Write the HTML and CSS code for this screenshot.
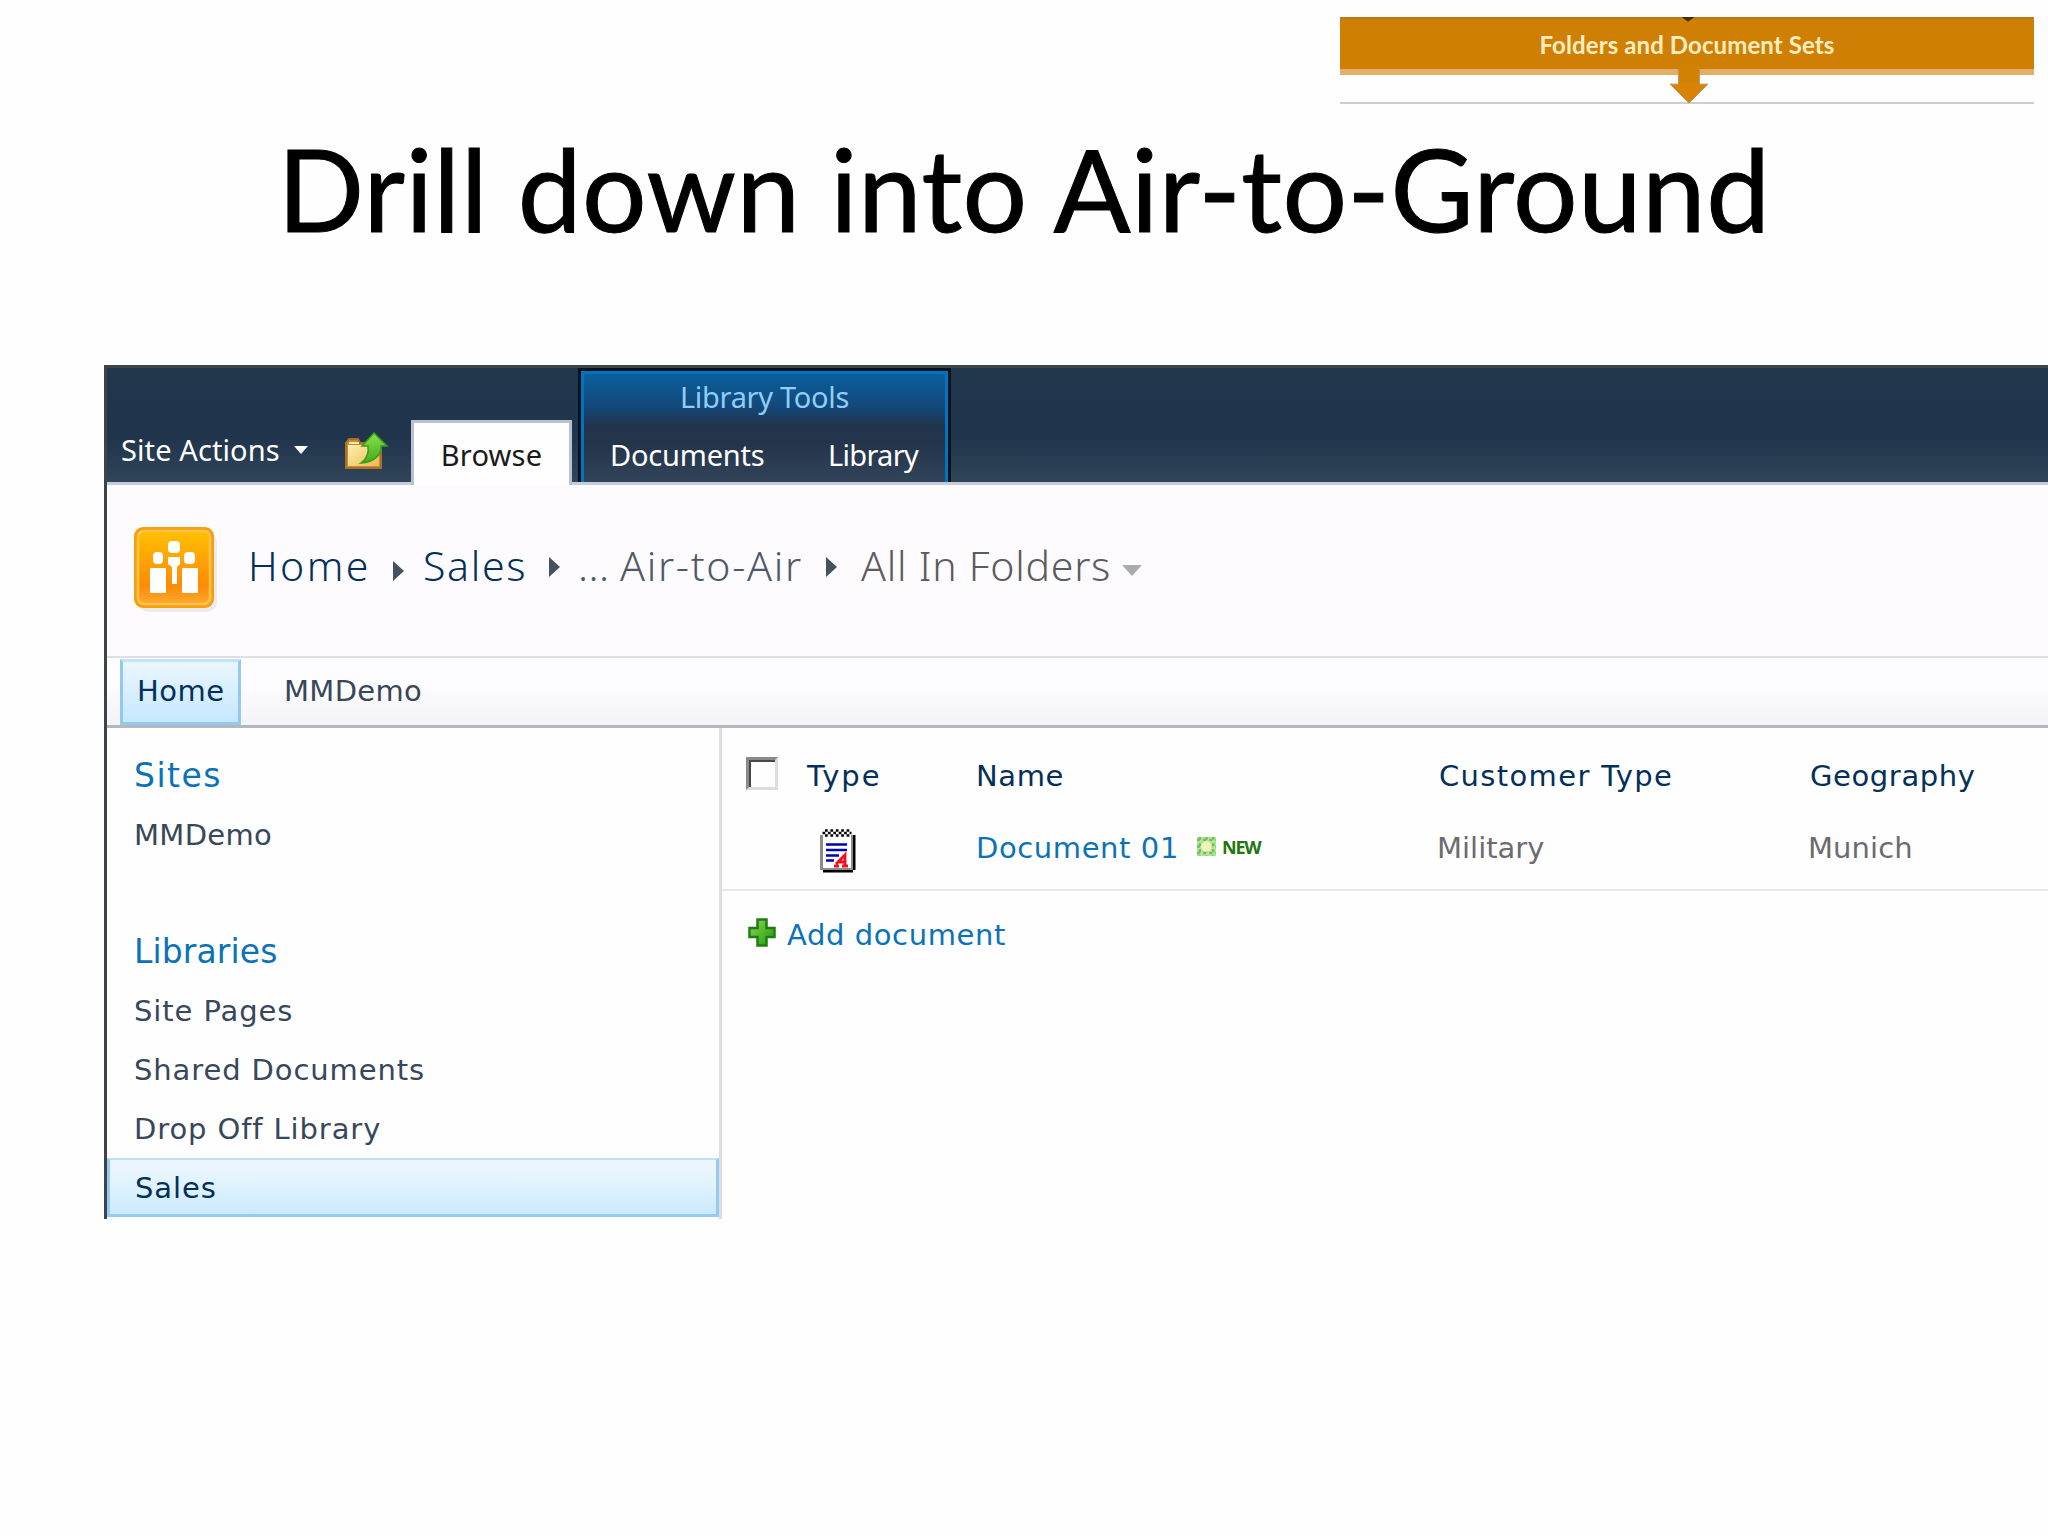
FILE: index.html
```
<!DOCTYPE html>
<html lang="en">

<head>
    <meta charset="UTF-8">
    <title>Drill down into Air-to-Ground</title>
    <link rel="stylesheet" href="styles.css">
</head>

<body>
    <div class="banner">
        <div class="banner-bar">Folders and Document Sets</div>
        <svg class="banner-arrow" width="44" height="92" viewBox="0 0 44 92">
            <path d="M14 0h14l-7 5z" fill="#4a2c08" />
            <path d="M11 54h22v17h9L22 91 2 71h9z" fill="#d98208" stroke="#b5905a" stroke-width="1" />
            <path d="M12 50h20v20H12z" fill="#d08205" />
        </svg>
    </div>
    <h1>Drill down into Air-to-Ground</h1>

    <div class="app">
        <div class="ribbon">
            <div class="site-actions">Site Actions <span class="caret"></span></div>
            <svg class="up-icon" width="45" height="40" viewBox="0 0 45 40">
                <defs>
                    <linearGradient id="folder" x1="0" y1="0" x2="1" y2="1">
                        <stop offset="0" stop-color="#fff0b0" />
                        <stop offset="1" stop-color="#f0b850" />
                    </linearGradient>
                    <linearGradient id="up" x1="0" y1="0" x2="0" y2="1">
                        <stop offset="0" stop-color="#8be04a" />
                        <stop offset="1" stop-color="#3fae1c" />
                    </linearGradient>
                </defs>
                <path d="M2 37V12l3-4h9l2 4h21v25z" fill="#c98a3a" stroke="#a9702a" stroke-width="2" />
                <path d="M4 35V14h31v21z" fill="url(#folder)" />
                <path d="M5 12h10" stroke="#ffe9a8" stroke-width="2" />
                <path d="M30 2l13 13h-6c1 8-6 16-20 17 6-4 8-10 7-17h-6z" fill="url(#up)" stroke="#3b9a1f" stroke-width="1.5" />
            </svg>
            <div class="tab-browse">Browse</div>
            <div class="context-group">
                <div class="context-title">Library Tools</div>
                <div class="context-tabs">
                    <span class="tab-documents">Documents</span>
                    <span class="tab-library">Library</span>
                </div>
            </div>
        </div>

        <div class="header">
            <svg class="logo" width="86" height="88" viewBox="0 0 86 88">
                <defs>
                    <linearGradient id="tile" x1="0" y1="0" x2="0" y2="1">
                        <stop offset="0" stop-color="#ffc000" />
                        <stop offset="0.75" stop-color="#ff8a08" />
                        <stop offset="1" stop-color="#ffa92e" />
                    </linearGradient>
                </defs>
                <rect x="4" y="5" width="79" height="80" rx="10" fill="#ecebef" />
                <rect x="0" y="0" width="80" height="81" rx="9" fill="#fb9d10" />
                <rect x="4" y="4" width="72" height="73" rx="6" fill="url(#tile)" stroke="#ffc64a" stroke-width="2.5" />
                <g fill="#fff">
                    <rect x="16" y="41" width="16" height="25" rx="1" />
                    <rect x="48" y="41" width="16" height="25" rx="1" />
                    <rect x="19" y="25" width="10" height="12" rx="4" />
                    <rect x="50" y="25" width="11" height="12" rx="4" />
                    <rect x="34" y="14" width="12" height="12" rx="4" />
                    <path d="M34 30h12v7l-3 3v17h-5V40l-4-3z" />
                </g>
            </svg>
            <div class="breadcrumb">
                <a class="crumb-home">Home</a>
                <span class="arrow low"></span>
                <a class="crumb-sales">Sales</a>
                <span class="arrow"></span>
                <span class="crumb-dots">...</span>
                <span class="crumb-air">Air-to-Air</span>
                <span class="arrow"></span>
                <span class="crumb-view">All In Folders</span>
                <span class="caret view-caret"></span>
            </div>
        </div>

        <div class="topnav">
            <a class="nav-home">Home</a>
            <a class="nav-item">MMDemo</a>
        </div>

        <div class="main">
            <div class="sidebar">
                <h2 class="sites">Sites</h2>
                <a class="tight">MMDemo</a>
                <h2 class="libraries">Libraries</h2>
                <a>Site Pages</a>
                <a>Shared Documents</a>
                <a>Drop Off Library</a>
                <a class="selected">Sales</a>
            </div>

            <div class="list">
                <div class="row head">
                    <span class="checkbox"></span>
                    <span class="col-type">Type</span>
                    <span>Name</span>
                    <span class="col-customer">Customer Type</span>
                    <span class="col-geo">Geography</span>
                </div>
                <div class="row item">
                    <span></span>
                    <svg class="doc-icon" width="36" height="44" viewBox="0 0 36 44">
                        <path d="M33 6h2.500v35H33v2.500H3V41h30z" fill="#000" />
                        <path d="M0 6h3v35H0z" fill="#8c8c8c" />
                        <path d="M3 4h30v37H3z" fill="#fff" />
                        <path d="M2 40h31M32 6v34" stroke="#8c8c8c" stroke-width="2" />
                        <path d="M5 1.500h26M5 6.500h26" stroke="#000" stroke-width="2.500" stroke-dasharray="2.700 2.700" />
                        <path d="M2.500 4h29" stroke="#000" stroke-width="2.500" stroke-dasharray="2.700 2.700" />
                        <path d="M6 15.500h21M6 21h21M6 26.500h13M6 31.500h8" stroke="#0000b4" stroke-width="2.600" />
                        <path d="M14 37h5M16 35l9-9v11M18 33h7M22 37h6" fill="none" stroke="#f01020" stroke-width="2.800" />
                    </svg>
                    <span class="name"><a>Document 01</a>
                        <svg class="new-icon" width="19" height="19" viewBox="0 0 20 20">
                            <rect width="20" height="20" fill="#b4e39a" />
                            <path d="M3 0v20M10 0v20M17 0v20M0 3h20M0 10h20M0 17h20" stroke="#6cc05a" stroke-width="2.500" stroke-dasharray="3 3.500" />
                            <circle cx="10" cy="10" r="5.500" fill="#f4f3b4" />
                        </svg>
                        <b>NEW</b>
                    </span>
                    <span class="value-customer">Military</span>
                    <span class="value-geo">Munich</span>
                </div>
                <div class="add">
                    <svg width="28" height="29" viewBox="0 0 28 29">
                        <defs>
                            <linearGradient id="plus" x1="0" y1="0" x2="1" y2="1">
                                <stop offset="0" stop-color="#8fd64c" />
                                <stop offset="1" stop-color="#1f9a12" />
                            </linearGradient>
                        </defs>
                        <path d="M9.500 1.500h9v8.500h8v9h-8v8.500h-9V19h-8v-9h8z" fill="url(#plus)" stroke="#1f7d12" stroke-width="2.500" />
                    </svg>
                    <a>Add document</a>
                </div>
            </div>
        </div>
    </div>
</body>

</html>
```
FILE: styles.css
```
body {
    margin: 0;
    width: 2048px;
    height: 1536px;
    overflow: hidden;
    display: flex;
    flex-direction: column;
    background: #fefefe;
    font-family: "DejaVu Sans", Verdana, sans-serif;
    font-size: 29px;
}

/* orange strip at the top right */
.banner {
    position: relative;
    box-sizing: border-box;
    align-self: flex-end;
    width: 694px;
    height: 87px;
    margin: 17px 14px 0 0;
    border-bottom: 2px solid #d2cdc6;
}

.banner-bar {
    height: 52px;
    background: #cf8004;
    border-bottom: 6px solid #e2ae6a;
    box-shadow: inset 0 2px 0 #b87a1c;
    font: bold 24px/55px Lato, sans-serif;
    letter-spacing: 0.1px;
    color: #ffedc0;
    text-align: center;
}

.banner-arrow {
    position: absolute;
    left: 327px;
    top: 0;
    height: 87px;
}

h1 {
    margin: 18px 0 0;
    font: 114px/132px Lato, Calibri, sans-serif;
    letter-spacing: 0.5px;
    text-align: center;
    color: #000;
    -webkit-text-stroke: 1px #000;
}

.app {
    box-sizing: border-box;
    height: 854px;
    margin: 111px 0 0 104px;
    border-top: 3px solid #3f4444;
    border-left: 3px solid #3f4246;
}

/* ribbon */
.ribbon {
    display: flex;
    align-items: flex-end;
    height: 114px;
    background: linear-gradient(#21374c 0%, #20344b 60%, #30445a 100%);
    border-bottom: 3px solid #c6ccdb;
    font-family: "Noto Sans", Tahoma, sans-serif;
    color: #fff;
}

.site-actions {
    display: flex;
    align-items: center;
    width: 223px;
    padding-left: 14px;
    margin-bottom: 12px;
    line-height: 40px;
    letter-spacing: 0.1px;
}

.caret {
    margin-left: 14px;
    border: 7px solid transparent;
    border-top: 8px solid #fff;
    border-bottom: 0;
}

.up-icon {
    width: 45px;
    margin: 0 22px 11px 0;
}

.tab-browse {
    box-sizing: border-box;
    width: 161px;
    height: 65px;
    margin-bottom: -3px;
    border: 3px solid #b9c0cf;
    border-bottom: 0;
    background: #fefefe;
    color: #1a1a1a;
    line-height: 63px;
    letter-spacing: 0.2px;
    text-align: center;
}

.context-group {
    box-sizing: border-box;
    width: 367px;
    height: 111px;
    margin-left: 9px;
    border: 3px solid #0173c1;
    border-bottom: 0;
    outline: 3px solid #06141f;
    clip-path: inset(-3px -3px 0 -3px);
    background: linear-gradient(#0a5f9e 0%, #12487a 30%, #22344c 48%, #24344b 65%, #30445a 100%);
}

.context-title {
    line-height: 45px;
    letter-spacing: -0.3px;
    text-align: center;
    color: #8fcdf8;
}

.context-tabs {
    display: flex;
    padding: 6px 0 0 26px;
    line-height: 60px;
}

.tab-documents {
    width: 218px;
    letter-spacing: -0.2px;
}

.tab-library {
    letter-spacing: -0.7px;
}

/* title area */
.header {
    display: flex;
    box-sizing: border-box;
    height: 171px;
    padding: 42px 0 0 27px;
    background: #fdfbfe;
}

.breadcrumb {
    display: grid;
    grid-template-columns: 145px 30px 126px 29px 42px 206px 35px 261px 30px;
    align-items: center;
    height: 76px;
    margin-left: 28px;
    font: 350 41px/76px "Noto Sans", Verdana, sans-serif;
    color: #4e5a69;
    white-space: nowrap;
}

.crumb-home {
    color: #03305a;
    letter-spacing: 2.4px;
}

.crumb-sales {
    color: #03305a;
    letter-spacing: 1.7px;
}

.crumb-dots {
    letter-spacing: 0.5px;
}

.crumb-air {
    letter-spacing: 1.7px;
}

.crumb-view {
    color: #5c5c60;
    letter-spacing: 0.75px;
}

.arrow {
    width: 0;
    margin-top: 4px;
    border: 10px solid transparent;
    border-left: 11px solid #44525f;
    border-right: 0;
}

.arrow.low {
    margin-top: 12px;
}

.view-caret {
    width: 0;
    margin: 10px 0 0;
    border-width: 11px 10px 0;
    border-top-color: #aaabae;
}

.topnav {
    display: flex;
    box-sizing: border-box;
    height: 72px;
    padding: 1px 0 0 13px;
    border-top: 2px solid #dfdfe4;
    border-bottom: 3px solid #b6b7ba;
    background: linear-gradient(#fdfcfe 40%, #f3f4f7);
    line-height: 64px;
    color: #38475a;
}

.nav-home {
    box-sizing: border-box;
    width: 121px;
    padding-left: 14px;
    border: 3px solid #92c9f3;
    border-top-color: #c4e2f8;
    background: linear-gradient(#e9f6fe, #c6e8fd);
    line-height: 58px;
    letter-spacing: 0.5px;
    color: #03305a;
}

.nav-item {
    margin-left: 43px;
    letter-spacing: 0.3px;
}

.main {
    display: flex;
    height: 491px;
}

.sidebar {
    display: flex;
    flex-direction: column;
    box-sizing: border-box;
    width: 615px;
    padding-top: 18px;
    border-right: 3px solid #dddee3;
    line-height: 59px;
    letter-spacing: 0.9px;
    color: #38475a;
}

.sidebar a,
.sidebar h2 {
    padding-left: 27px;
}

.sidebar h2 {
    margin: 0;
    font-size: 33px;
    font-weight: normal;
    line-height: 60px;
    color: #0b72b8;
}

.sidebar .sites {
    letter-spacing: 1.5px;
}

.sidebar .libraries {
    margin-top: 57px;
    letter-spacing: 0.1px;
}

.sidebar .tight {
    letter-spacing: 0.3px;
}

.sidebar .selected {
    box-sizing: border-box;
    height: 59px;
    margin-top: -1px;
    padding-left: 25px;
    border: 3px solid #94cbf2;
    border-top: 2px solid #bfdff5;
    background: linear-gradient(#eef5fd, #e2f4fe 40%, #cbe9fd);
    line-height: 56px;
    letter-spacing: 0.9px;
    color: #03305a;
}

/* document list */
.list {
    flex: 1;
    padding-top: 15px;
}

.row {
    display: grid;
    grid-template-columns: 60px 170px 461px 372px 1fr;
    align-items: center;
    padding-left: 24px;
    white-space: nowrap;
}

.head {
    height: 66px;
    letter-spacing: 0.6px;
    color: #03305a;
}

.item {
    height: 78px;
    padding-bottom: 2px;
    border-bottom: 2px solid #e8e8ea;
    color: #6c6c70;
}

.checkbox {
    box-sizing: border-box;
    width: 32px;
    height: 33px;
    margin-bottom: 5px;
    border: 3px solid #8a8a8c;
    border-right-color: #dcdcdc;
    border-bottom-color: #dcdcdc;
    box-shadow: inset 2px 2px 0 #48484a;
}

.col-type {
    padding-left: 1px;
    letter-spacing: 2px;
}

.col-customer {
    padding-left: 2px;
    letter-spacing: 1.35px;
}

.col-geo {
    padding-left: 1px;
}

.value-customer {
    letter-spacing: 0;
}

.value-geo {
    margin-left: -1px;
    letter-spacing: 0.1px;
}

.doc-icon {
    margin: 5px 0 0 14px;
}

.name {
    display: flex;
    align-items: center;
}

.name a,
.add a {
    color: #0b72b8;
    letter-spacing: 0.6px;
}

.new-icon {
    margin: 0 6px 3px 18px;
}

.name b {
    margin-bottom: 3px;
    font: bold 18px "Open Sans", sans-serif;
    letter-spacing: -1.2px;
    color: #23760f;
}

.add {
    display: flex;
    align-items: center;
    height: 80px;
    padding: 4px 0 0 26px;
}

.add svg {
    margin: 0 11px 6px 0;
}
```
